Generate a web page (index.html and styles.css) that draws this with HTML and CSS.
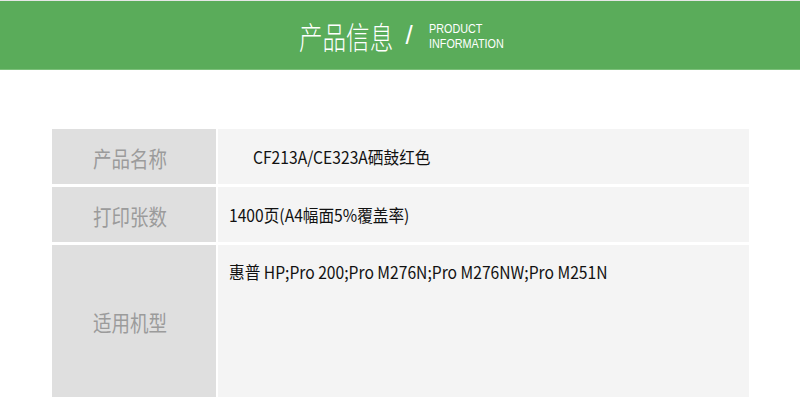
FILE: index.html
```html
<!DOCTYPE html>
<html lang="zh-CN">
<head>
  <meta charset="UTF-8" />
  <title>产品信息</title>
  <link rel="stylesheet" href="styles.css">
</head>
<body>
  <header class="banner">
    <div class="banner-title">
      <span class="cn">产品信息</span>
      <span class="slash">/</span>
      <span class="en">PRODUCT<br>INFORMATION</span>
    </div>
  </header>

  <div class="spec">
    <div class="label"><span class="squeeze">产品名称</span></div>
    <div class="value first"><span class="squeeze">CF213A/CE323A硒鼓红色</span></div>

    <div class="label"><span class="squeeze">打印张数</span></div>
    <div class="value"><span class="squeeze">1400页(A4幅面5%覆盖率)</span></div>

    <div class="label"><span class="squeeze">适用机型</span></div>
    <div class="value top"><span class="squeeze">惠普 HP;Pro 200;Pro M276N;Pro M276NW;Pro M251N</span></div>
  </div>
</body>
</html>
```

FILE: styles.css
```css
body {
  margin: 0;
  background: #ffffff;
  font-family: "Noto Sans CJK SC", "Noto Sans", sans-serif;
}

.banner {
  height: 68px;
  background: #5aac5a;
  border-top: 1px solid #e6e6e6;
  border-bottom: 1px solid #7cc07a;
  display: flex;
  justify-content: center;
  align-items: center;
}

.banner-title {
  display: flex;
  align-items: center;
  color: #ffffff;
  margin-left: 2px;
}

.banner-title .cn {
  display: inline-block;
  font-size: 31px;
  font-weight: 300;
  width: 94px;
  white-space: nowrap;
  transform: scaleX(.76);
  transform-origin: left center;
}

.banner-title .slash {
  font-family: "Liberation Sans", sans-serif;
  font-size: 26px;
  font-weight: 300;
  margin: 0 16px 0 12px;
}

.banner-title .en {
  display: inline-block;
  font-family: "Liberation Sans", sans-serif;
  font-size: 13px;
  line-height: 15px;
  width: 74px;
  white-space: nowrap;
  transform: scaleX(.83);
  transform-origin: left center;
  margin-top: 2px;
}

.spec {
  display: grid;
  grid-template-columns: 164px 531px;
  grid-template-rows: 55px 55px 152px;
  column-gap: 2px;
  row-gap: 3px;
  margin: 59px 0 0 52px;
}

.label {
  background: #dfdfdf;
  color: #9b9b9b;
  font-size: 22px;
  display: flex;
  align-items: center;
  justify-content: center;
  padding-right: 8px;
}

.label .squeeze {
  display: inline-block;
  transform: scaleX(.84);
}

.value {
  background: #f4f4f4;
  color: #111111;
  font-size: 17px;
  display: flex;
  align-items: center;
  padding-left: 11px;
}

.value .squeeze {
  display: inline-block;
  white-space: nowrap;
  transform: scaleX(.92);
  transform-origin: left center;
}

.value.first {
  padding-left: 35px;
}

.value.top {
  align-items: flex-start;
  padding-top: 14px;
}
```
